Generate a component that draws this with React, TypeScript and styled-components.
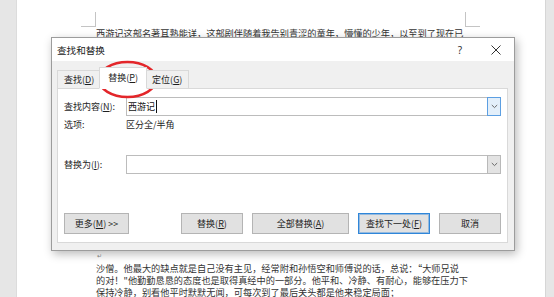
import React from "react";
import styled, { createGlobalStyle } from "styled-components";

const Global = createGlobalStyle`
  html, body { margin: 0; padding: 0; background: #fff; }
  body {
    width: 554px;
    height: 297px;
    overflow: hidden;
    font-family: "Noto Sans CJK SC", "Noto Sans", sans-serif;
  }
`;

const Screen = styled.div`
  position: relative;
  display: flex;
  width: 554px;
  height: 297px;
  overflow: hidden;
`;

const Gutter = styled.div<{ $w: number; $side: "left" | "right" }>`
  flex: 0 0 ${(p) => p.$w}px;
  background: #e6e6e6;
  box-sizing: border-box;
  ${(p) => (p.$side === "left" ? "border-right: 1px solid #dcdcdc;" : "border-left: 1px solid #d6d6d6;")}
`;

const Page = styled.main`
  flex: 1;
  background: #fff;
  padding: 12px 0 0 64px;
  color: #333;
  font-family: "Noto Sans CJK SC", sans-serif;
  font-size: 9.2px;
  line-height: 12px;
`;

const CornerRow = styled.div`
  display: flex;
  height: 15px;
`;

const CornerMark = styled.div<{ $side: "left" | "right" }>`
  box-sizing: border-box;
  width: 15px;
  height: 15px;
  border-bottom: 1px solid #c4c4c4;
  ${(p) => (p.$side === "left" ? "border-right: 1px solid #c4c4c4;" : "border-left: 1px solid #c4c4c4;")}
`;

const TextArea = styled.div`
  width: 369px;
`;

const CornerGap = styled.div`
  width: 369px;
`;

const TextBlock = styled.div`
  margin-left: 15px;
`;

const Line = styled.div`
  white-space: nowrap;
  height: 12px;
`;

const HiddenSpace = styled.div`
  height: 211px;
`;

const ReturnMark = styled.div`
  height: 12px;
  font-family: "DejaVu Sans", sans-serif;
  font-size: 6px;
  line-height: 12px;
  color: #8a8a8a;
  padding-left: 1px;
`;

/* ---------- dialog ---------- */

const Dialog = styled.section`
  position: absolute;
  left: 51px;
  top: 37px;
  width: 464px;
  height: 214px;
  box-sizing: border-box;
  border: 1px solid #9c9c9c;
  background: #f0f0f0;
  box-shadow: 2px 3px 9px rgba(0, 0, 0, 0.28);
  display: flex;
  flex-direction: column;
  font-family: "Noto Sans CJK SC", sans-serif;
  font-size: 9px;
  color: #1e1e1e;
`;

const TitleBar = styled.header`
  height: 23px;
  background: #fff;
  display: flex;
  align-items: center;
  padding-left: 5px;
`;

const Title = styled.div`
  flex: 1;
  font-size: 9.6px;
  line-height: 12px;
  color: #1a1a1a;
`;

const TitleButton = styled.div`
  width: 36px;
  height: 23px;
  display: flex;
  align-items: center;
  justify-content: center;
  font-family: "Noto Sans", sans-serif;
  font-size: 10px;
  color: #333;
`;

const Body = styled.div`
  flex: 1;
  display: flex;
  flex-direction: column;
  padding: 6px 6px 7px 5px;
  min-height: 0;
`;

const TabStrip = styled.div`
  position: relative;
  z-index: 1;
  display: flex;
  align-items: flex-end;
  height: 22px;
  margin-bottom: -1px;
`;

const Tab = styled.div<{ $active?: boolean }>`
  box-sizing: border-box;
  display: flex;
  align-items: center;
  justify-content: center;
  border: 1px solid #d9d9d9;
  line-height: 12px;
  white-space: nowrap;
  ${(p) =>
    p.$active
      ? `
    height: 22px;
    padding: 0 8px 1px;
    margin: 0 -2px;
    background: #fff;
    border-bottom-color: #fff;
    position: relative;
    z-index: 2;
  `
      : `
    height: 19px;
    padding: 0 6px;
    background: #f0f0f0;
  `}
`;

const Panel = styled.div`
  flex: 1;
  display: flex;
  flex-direction: column;
  background: #fff;
  border: 1px solid #d9d9d9;
  padding: 8px 6px 8px 6px;
  min-height: 0;
`;

const FieldRow = styled.div<{ $gap: number; $h: number }>`
  display: grid;
  grid-template-columns: 62px 1fr;
  align-items: center;
  height: ${(p) => p.$h}px;
  margin-top: ${(p) => p.$gap}px;
  line-height: 12px;
  white-space: nowrap;
`;

const Label = styled.span`
  color: #1e1e1e;
  u {
    text-underline-offset: 1px;
  }
`;

const Combo = styled.div`
  box-sizing: border-box;
  height: 19px;
  display: flex;
  align-items: stretch;
  border: 1px solid #bcbcbc;
  background: #fff;
`;

const ComboText = styled.div`
  flex: 1;
  display: flex;
  align-items: center;
  padding-left: 1px;
  color: #111;
`;

const Caret = styled.span`
  display: inline-block;
  width: 1px;
  height: 13px;
  margin-left: 1px;
  background: #111;
`;

const DropButton = styled.div<{ $focus?: boolean }>`
  box-sizing: border-box;
  width: 14px;
  margin: -1px -1px -1px 0;
  display: flex;
  align-items: center;
  justify-content: center;
  border: 1px solid ${(p) => (p.$focus ? "#5c9fe2" : "#b9b9b9")};
  background: ${(p) => (p.$focus ? "#e3effa" : "#e3e3e3")};
`;

const ButtonRow = styled.div`
  margin-top: auto;
  display: flex;
  align-items: center;
`;

const ButtonGroup = styled.div`
  margin-left: auto;
  display: flex;
  gap: 9px;
`;

const Button = styled.div<{ $w: number; $default?: boolean }>`
  box-sizing: border-box;
  width: ${(p) => p.$w}px;
  height: 21px;
  display: flex;
  align-items: center;
  justify-content: center;
  background: #e1e1e1;
  border: 1px solid ${(p) => (p.$default ? "#2f86d9" : "#b4b4b4")};
  ${(p) => (p.$default ? "box-shadow: inset 0 0 0 1px rgba(60, 140, 220, 0.45);" : "")}
  color: #1e1e1e;
  line-height: 12px;
  white-space: nowrap;
  u {
    text-underline-offset: 1px;
  }
`;

const Annotation = styled.svg`
  position: absolute;
  left: 96px;
  top: 59px;
  pointer-events: none;
`;

const Chevron = () => (
  <svg width="7" height="5" viewBox="0 0 7 5">
    <polyline points="0.8,1 3.5,3.6 6.2,1" fill="none" stroke="#6a6a6a" strokeWidth="1" />
  </svg>
);

const CloseIcon = () => (
  <svg width="10" height="10" viewBox="0 0 10 10">
    <path d="M0.5 0.5 L9.5 9.5 M9.5 0.5 L0.5 9.5" stroke="#333" strokeWidth="1" fill="none" />
  </svg>
);

export default function App() {
  return (
    <>
      <Global />
      <Screen>
        <Gutter $w={17} $side="left" />
        <Page>
          <CornerRow>
            <CornerMark $side="left" />
            <CornerGap />
            <CornerMark $side="right" />
          </CornerRow>
          <TextBlock>
            <TextArea>
              <Line>西游记这部名著耳熟能详，这部剧伴随着我告别青涩的童年，懵懂的少年，以至到了现在已</Line>
              <HiddenSpace />
              <ReturnMark>↵</ReturnMark>
              <Line>沙僧。他最大的缺点就是自己没有主见，经常附和孙悟空和师傅说的话，总说：“大师兄说</Line>
              <Line>的对！"他勤勤恳恳的态度也是取得真经中的一部分。他平和、冷静、有耐心，能够在压力下</Line>
              <Line>保持冷静，别看他平时默默无闻，可每次到了最后关头都是他来稳定局面；</Line>
            </TextArea>
          </TextBlock>
        </Page>
        <Gutter $w={9} $side="right" />

        <Dialog>
          <TitleBar>
            <Title>查找和替换</Title>
            <TitleButton>?</TitleButton>
            <TitleButton>
              <CloseIcon />
            </TitleButton>
          </TitleBar>
          <Body>
            <TabStrip>
              <Tab>
                查找(<u>D</u>)
              </Tab>
              <Tab $active>
                替换(<u>P</u>)
              </Tab>
              <Tab>
                定位(<u>G</u>)
              </Tab>
            </TabStrip>
            <Panel>
              <FieldRow $gap={0} $h={19}>
                <Label>
                  查找内容(<u>N</u>):
                </Label>
                <Combo>
                  <ComboText>
                    西游记
                    <Caret />
                  </ComboText>
                  <DropButton $focus>
                    <Chevron />
                  </DropButton>
                </Combo>
              </FieldRow>
              <FieldRow $gap={3} $h={12}>
                <Label>选项:</Label>
                <Label>区分全/半角</Label>
              </FieldRow>
              <FieldRow $gap={24} $h={19}>
                <Label>
                  替换为(<u>I</u>):
                </Label>
                <Combo>
                  <ComboText />
                  <DropButton>
                    <Chevron />
                  </DropButton>
                </Combo>
              </FieldRow>
              <ButtonRow>
                <Button $w={65}>
                  更多(<u>M</u>) &gt;&gt;
                </Button>
                <ButtonGroup>
                  <Button $w={62}>
                    替换(<u>R</u>)
                  </Button>
                  <Button $w={97}>
                    全部替换(<u>A</u>)
                  </Button>
                  <Button $w={72} $default>
                    查找下一处(<u>F</u>)
                  </Button>
                  <Button $w={62}>取消</Button>
                </ButtonGroup>
              </ButtonRow>
            </Panel>
          </Body>
        </Dialog>

        <Annotation width="64" height="42" viewBox="0 0 64 42">
          <ellipse cx="31.5" cy="20.5" rx="28.5" ry="17.5" fill="none" stroke="#e3262a" strokeWidth="2.5" />
        </Annotation>
      </Screen>
    </>
  );
}
